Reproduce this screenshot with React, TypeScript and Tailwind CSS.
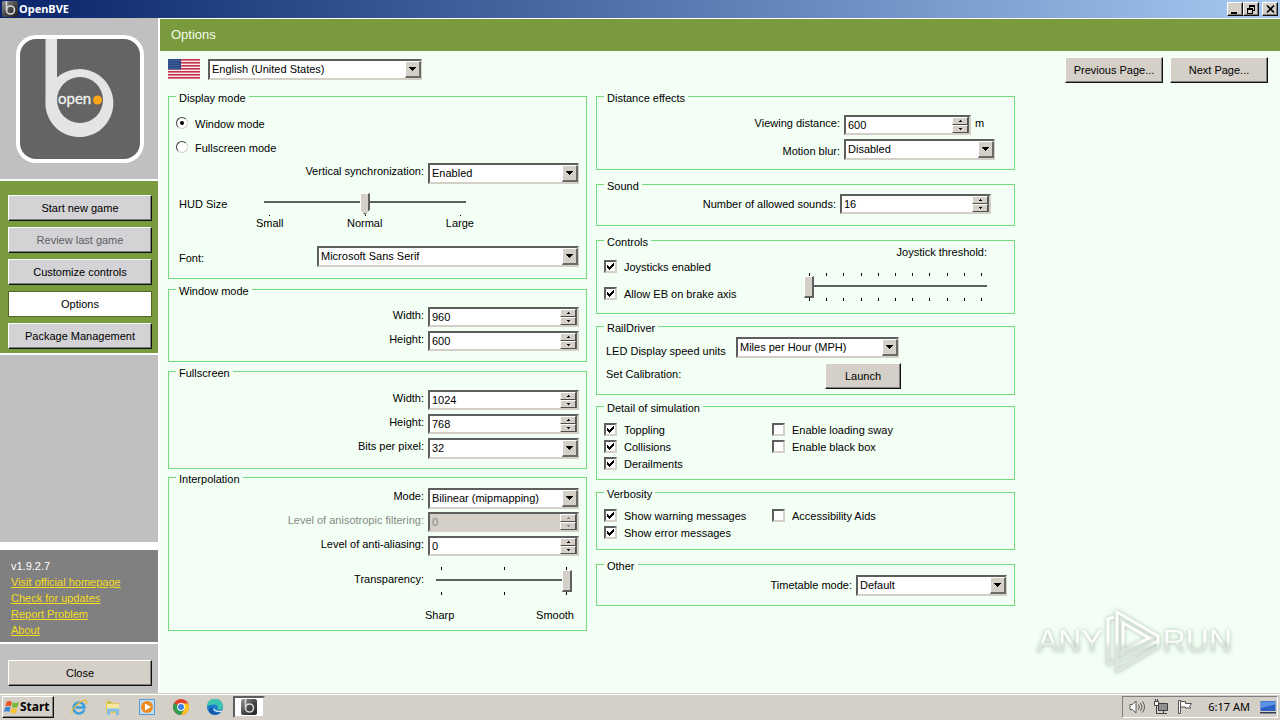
import { useId, type ReactNode } from 'react'

const raised =
  'border border-t-white border-l-white border-r-[#101010] border-b-[#101010] shadow-[inset_-1px_-1px_0_#808080]'
const sunken =
  'border-2 border-t-[#5c5f5c] border-l-[#5c5f5c] border-r-[#d4d0c8] border-b-[#d4d0c8]'

interface PushButtonProps {
  children: ReactNode
  className?: string
  disabled?: boolean
}

function PushButton({ children, className = '', disabled }: PushButtonProps) {
  return (
    <button type="button" disabled={disabled} className={`h-[26px] text-center ${raised} ${className}`}>
      {children}
    </button>
  )
}

/** Group box: the legend sits on the border line */
function Group({ title, className = '', children }: { title: string; className?: string; children: ReactNode }) {
  return (
    <fieldset className={`min-w-0 border border-[#74dc7c] ${className}`}>
      <legend className="ml-[7px] px-[3px] pt-1 leading-[13px]">{title}</legend>
      {children}
    </fieldset>
  )
}

interface ComboProps {
  id: string
  value: string
  className?: string
  label?: string
}

function Combo({ id, value, className = '', label }: ComboProps) {
  return (
    <div className={`relative h-[21px] bg-white ${sunken} ${className}`}>
      <select
        id={id}
        aria-label={label}
        defaultValue={value}
        className="block h-full w-full appearance-none bg-transparent pl-0.5 pr-5 leading-[17px] outline-none"
      >
        <option>{value}</option>
      </select>
      <span className="pointer-events-none absolute -right-px top-0 flex h-[17px] w-4 items-center justify-center border-b-2 border-l border-r-2 border-t border-b-[#6a6a66] border-l-white border-r-[#6a6a66] border-t-white bg-[#d4d0c8]">
        <svg width="7" height="4" viewBox="0 0 7 4" shapeRendering="crispEdges">
          <path d="M0 0h7v1H6v1H5v1H4v1H3V3H2V2H1V1H0z" />
        </svg>
      </span>
    </div>
  )
}

interface SpinnerProps {
  id: string
  value: string
  className?: string
  disabled?: boolean
}

function Spinner({ id, value, className = '', disabled }: SpinnerProps) {
  const arrow = disabled ? 'fill-[#808080]' : 'fill-black'
  const step = `flex h-2 w-4 items-center justify-center border border-t-white border-l-white border-r-[#505050] border-b-[#505050] bg-[#d4d0c8]`
  return (
    <div className={`flex h-5 ${disabled ? 'bg-[#d4d0c8]' : 'bg-white'} ${sunken} ${className}`}>
      <input
        id={id}
        type="text"
        inputMode="numeric"
        defaultValue={value}
        disabled={disabled}
        className="w-0 flex-1 bg-transparent pl-0.5 leading-[14px] outline-none disabled:text-[#808080]"
      />
      <div className="flex flex-col border-r border-[#5c5f5c]">
        <button type="button" aria-label="Increase" disabled={disabled} className={step}>
          <svg width="3" height="2" viewBox="0 0 3 2" shapeRendering="crispEdges" className={arrow}>
            <path d="M1 0h1v1h1v1H0V1h1z" />
          </svg>
        </button>
        <button type="button" aria-label="Decrease" disabled={disabled} className={step}>
          <svg width="3" height="2" viewBox="0 0 3 2" shapeRendering="crispEdges" className={arrow}>
            <path d="M0 0h3v1H2v1H1V1H0z" />
          </svg>
        </button>
      </div>
    </div>
  )
}

interface FieldProps {
  label: string
  value: string
  kind: 'combo' | 'spinner'
  disabled?: boolean
  className?: string
  labelClass?: string
  unit?: string
}

/** Right-aligned label followed by its control */
function Field({ label, value, kind, disabled, className = 'pr-[7px]', labelClass = '', unit }: FieldProps) {
  const id = useId()
  return (
    <div className={`flex h-6 items-start justify-end gap-1 ${className}`}>
      <label htmlFor={id} className={`leading-4 ${labelClass} ${disabled ? 'text-[#868a86]' : ''}`}>
        {label}
      </label>
      <div className="flex w-[151px] gap-1">
        {kind === 'combo' ? (
          <Combo id={id} value={value} className="flex-1" />
        ) : (
          <Spinner id={id} value={value} disabled={disabled} className="flex-1" />
        )}
        {unit && <span className="w-5 leading-4">{unit}</span>}
      </div>
    </div>
  )
}

function Check({ label, checked = false, className = 'h-[17px]' }: { label: string; checked?: boolean; className?: string }) {
  return (
    <label className={`flex items-center gap-[7px] ${className}`}>
      <span className="relative size-[13px]">
        <input
          type="checkbox"
          defaultChecked={checked}
          className={`peer block size-[13px] appearance-none bg-white ${sunken}`}
        />
        <svg
          viewBox="0 0 7 7"
          shapeRendering="crispEdges"
          className="pointer-events-none absolute left-[3px] top-[3px] hidden size-[7px] peer-checked:block"
        >
          <path d="M0 2h1v1h1v1h1V3h1V2h1V1h1V0h1v3H6v1H5v1H4v1H3v1H2V6H1V5H0z" />
        </svg>
      </span>
      <span className="pt-0.5 leading-[13px]">{label}</span>
    </label>
  )
}

function Radio({ label, checked = false }: { label: string; checked?: boolean }) {
  return (
    <label className="flex h-6 items-center gap-[7px]">
      <span className="relative size-3">
        <input
          type="radio"
          name="display-mode"
          defaultChecked={checked}
          className="peer block size-3 appearance-none rounded-full border border-b-[#d4d0c8] border-l-[#404040] border-r-[#d4d0c8] border-t-[#404040] bg-white"
        />
        <span className="pointer-events-none absolute left-1 top-1 hidden size-1 rounded-full bg-black peer-checked:block" />
      </span>
      <span className="pt-0.5 leading-[13px]">{label}</span>
    </label>
  )
}

function Ticks({ count, className = 'h-[3px]' }: { count: number; className?: string }) {
  return (
    <div className={`flex justify-between px-[5px] ${className}`}>
      {Array.from({ length: count }, (_, i) => (
        <span key={i} className="w-px bg-black" />
      ))}
    </div>
  )
}

interface SliderProps {
  id: string
  max: number
  value: number
  pointed?: boolean
}

function Slider({ id, max, value, pointed = false }: SliderProps) {
  return (
    <input
      id={id}
      type="range"
      min={0}
      max={max}
      defaultValue={value}
      className={`block h-[22px] w-full appearance-none bg-transparent [&::-webkit-slider-runnable-track]:h-[22px] [&::-webkit-slider-runnable-track]:bg-[linear-gradient(#5c5f5c,#5c5f5c)] [&::-webkit-slider-runnable-track]:bg-[length:100%_2px] [&::-webkit-slider-runnable-track]:bg-no-repeat [&::-webkit-slider-thumb]:h-[22px] [&::-webkit-slider-thumb]:w-[10px] [&::-webkit-slider-thumb]:appearance-none [&::-webkit-slider-thumb]:border-b-2 [&::-webkit-slider-thumb]:border-l [&::-webkit-slider-thumb]:border-r-2 [&::-webkit-slider-thumb]:border-t [&::-webkit-slider-thumb]:border-b-[#606060] [&::-webkit-slider-thumb]:border-l-white [&::-webkit-slider-thumb]:border-r-[#606060] [&::-webkit-slider-thumb]:border-t-white [&::-webkit-slider-thumb]:bg-[#d4d0c8] ${
        pointed
          ? '[&::-webkit-slider-runnable-track]:bg-[position:0_8px] [&::-webkit-slider-thumb]:[clip-path:polygon(0_0,100%_0,100%_75%,50%_100%,0_75%)]'
          : '[&::-webkit-slider-runnable-track]:bg-[position:0_9px]'
      }`}
    />
  )
}

function Logo() {
  return (
    <svg viewBox="0 0 128 128" className="size-32" role="img" aria-label="openBVE">
      <rect width="128" height="128" rx="20" fill="#fff" />
      <rect x="4" y="4" width="120" height="120" rx="16" fill="#646464" />
      <path d="M29.500 4h11.500v38.500A34 34 0 1 1 29.500 65z" fill="#e4e4e4" />
      <circle cx="64" cy="65" r="23" fill="#646464" />
      <text x="42" y="69" fill="#f2f2f2" stroke="#f2f2f2" strokeWidth="0.300" fontFamily="Lato, sans-serif" fontSize="15">
        open
      </text>
      <circle cx="81.500" cy="65" r="4.500" fill="#f9a51a" />
    </svg>
  )
}

function LogoBadge({ className }: { className: string }) {
  return (
    <svg viewBox="0 0 16 16" className={className}>
      <defs>
        <linearGradient id="badge" x1="0" y1="0" x2="1" y2="1">
          <stop offset="0" stopColor="#9a9a9a" />
          <stop offset="0.5" stopColor="#4a4a4a" />
          <stop offset="1" stopColor="#202020" />
        </linearGradient>
      </defs>
      <rect width="16" height="16" rx="2" fill="url(#badge)" />
      <path d="M4.500 0v9" stroke="#d8d8d8" strokeWidth="1.600" />
      <circle cx="8.500" cy="9" r="4" fill="none" stroke="#d8d8d8" strokeWidth="1.600" />
    </svg>
  )
}

function UsFlag() {
  return (
    <svg viewBox="0 0 32 20" className="h-5 w-8" role="img" aria-label="United States">
      <rect width="32" height="20" fill="#f4eef0" />
      {[0, 3, 6, 9, 12, 15, 18].map((y) => (
        <rect key={y} y={y} width="32" height="1.600" fill="#c8304c" />
      ))}
      <rect width="13" height="10.500" fill="#2c4a86" />
      {[1.5, 4, 6.500, 9].map((y) => (
        <path key={y} d={`M1 ${y}h11`} stroke="#6c86b8" strokeWidth="0.800" strokeDasharray="1 1.200" />
      ))}
    </svg>
  )
}

function TitleBar() {
  const control = `flex h-[14px] w-4 items-center justify-center bg-[#d4d0c8] ${raised}`
  return (
    <header className="flex h-[18px] items-center bg-linear-to-r from-[#0a246a] to-[#a6caf0] pl-0.5 pr-0.5">
      <LogoBadge className="size-4" />
      <h1 className="ml-px flex-1 font-['Noto_Sans',sans-serif] text-[11px] font-bold text-white">OpenBVE</h1>
      <button type="button" aria-label="Minimize" className={control}>
        <svg width="10" height="9" viewBox="0 0 10 9">
          <path d="M1 7h6v2H1z" />
        </svg>
      </button>
      <button type="button" aria-label="Restore" className={control}>
        <svg width="10" height="9" viewBox="0 0 10 9" shapeRendering="crispEdges">
          <path d="M3 0h6v6H7V5h1V2H4v1H3z" />
          <path d="M1 3h6v6H1zM2 5v3h4V5z" fillRule="evenodd" />
        </svg>
      </button>
      <button type="button" aria-label="Close window" className={`ml-[3px] ${control}`}>
        <svg width="9" height="8" viewBox="0 0 9 8" stroke="#000" strokeWidth="1.600">
          <path d="M1 0.500l7 7M8 0.500l-7 7" />
        </svg>
      </button>
    </header>
  )
}

const links = ['Visit official homepage', 'Check for updates', 'Report Problem', 'About']

function Sidebar() {
  return (
    <aside className="mr-0.5 flex w-[158px] shrink-0 flex-col bg-white">
      <div className="flex justify-center bg-[#c0c0c0] pb-4 pl-0.5 pt-[17px]">
        <Logo />
      </div>
      <nav className="mt-0.5 flex flex-col gap-1.5 bg-[#7a9a3e] pb-1 pl-2 pr-1.5 pt-3.5">
        <PushButton className="bg-[#d3d2d5]">Start new game</PushButton>
        <PushButton disabled className="bg-[#d3d2d5] text-[#5c6064]">
          Review last game
        </PushButton>
        <PushButton className="bg-[#d3d2d5]">Customize controls</PushButton>
        <button type="button" className="h-[26px] border border-[#4f6a25] bg-white text-center">
          Options
        </button>
        <PushButton className="bg-[#d3d2d5]">Package Management</PushButton>
      </nav>
      <div className="mt-0.5 flex-1 bg-[#c0c0c0]" />
      <div className="mt-2 flex flex-col items-start bg-[#808080] pb-1 pl-[11px] pt-2 leading-4 text-white">
        <p>v1.9.2.7</p>
        {links.map((text) => (
          <a key={text} href="#" className="text-[#f5dc1e] underline">
            {text}
          </a>
        ))}
      </div>
      <div className="mt-0.5 flex bg-[#c0c0c0] pb-[7px] pl-2 pr-1.5 pt-4">
        <PushButton className="flex-1 bg-[#d4d0c8]">Close</PushButton>
      </div>
    </aside>
  )
}

function LeftColumn() {
  const hud = useId()
  const font = useId()
  const transparency = useId()
  return (
    <div>
      <Group title="Display mode" className="pb-[11px]">
        <div className="pb-1 pl-[7px] pt-1.5">
          <Radio label="Window mode" checked />
          <Radio label="Fullscreen mode" />
        </div>
        <Field kind="combo" label="Vertical synchronization:" value="Enabled" />
        <div className="flex pl-2.5 pt-1.5">
          <label htmlFor={hud} className="w-[85px] leading-[22px]">
            HUD Size
          </label>
          <div className="w-[202px]">
            <Slider id={hud} max={2} value={1} pointed />
            <Ticks count={3} className="h-px" />
            <div className="-mx-2 flex justify-between leading-[14px]">
              <span>Small</span>
              <span>Normal</span>
              <span>Large</span>
            </div>
          </div>
        </div>
        <div className="flex justify-between pl-2.5 pr-[7px] pt-4">
          <label htmlFor={font} className="pt-1 leading-4">
            Font:
          </label>
          <Combo id={font} value="Microsoft Sans Serif" className="w-[262px]" />
        </div>
      </Group>

      <Group title="Window mode" className="mt-0.5 pb-1.5 pt-[9px]">
        <Field kind="spinner" label="Width:" value="960" />
        <Field kind="spinner" label="Height:" value="600" />
      </Group>

      <Group title="Fullscreen" className="mt-px pb-1.5 pt-2.5">
        <Field kind="spinner" label="Width:" value="1024" />
        <Field kind="spinner" label="Height:" value="768" />
        <Field kind="combo" label="Bits per pixel:" value="32" />
      </Group>

      <Group title="Interpolation" className="pb-2 pt-0.5">
        <Field kind="combo" label="Mode:" value="Bilinear (mipmapping)" />
        <Field kind="spinner" label="Level of anisotropic filtering:" value="0" disabled />
        <Field kind="spinner" label="Level of anti-aliasing:" value="0" />
        <div className="flex justify-end gap-3 pr-3.5 pt-[7px]">
          <label htmlFor={transparency} className="pt-1 leading-4">
            Transparency:
          </label>
          <div className="w-[136px]">
            <Ticks count={3} />
            <Slider id={transparency} max={2} value={2} />
            <Ticks count={3} />
          </div>
        </div>
        <div className="flex justify-end pr-3 pt-[13px] leading-[14px]">
          <div className="flex w-[149px] justify-between">
            <span>Sharp</span>
            <span>Smooth</span>
          </div>
        </div>
      </Group>
    </div>
  )
}

function RightColumn() {
  const threshold = useId()
  const units = useId()
  return (
    <div>
      <Group title="Distance effects" className="pb-1.5 pt-2.5">
        <Field kind="spinner" label="Viewing distance:" value="600" unit="m" className="pr-[19px]" />
        <Field kind="combo" label="Motion blur:" value="Disabled" className="pr-[19px]" labelClass="pt-1" />
      </Group>

      <Group title="Sound" className="mt-1.5 pb-[7px] pt-px">
        <Field
          kind="spinner"
          label="Number of allowed sounds:"
          value="16"
          className="pr-[23px]"
          labelClass="pt-0.5"
        />
      </Group>

      <Group title="Controls" className="mt-1.5 pb-1.5">
        <div className="flex justify-between pl-[7px] pr-[27px]">
          <div className="pt-1">
            <Check label="Joysticks enabled" checked className="h-[27px]" />
            <Check label="Allow EB on brake axis" checked className="h-[27px]" />
          </div>
          <div className="-mt-1 w-[183px]">
            <label htmlFor={threshold} className="block text-right leading-[14px]">
              Joystick threshold:
            </label>
            <div className="pt-3.5">
              <Ticks count={11} />
              <Slider id={threshold} max={10} value={0} />
              <Ticks count={11} />
            </div>
          </div>
        </div>
      </Group>

      <Group title="RailDriver" className="mt-1 pb-[5px] pt-0.5">
        <div className="flex items-start pl-[9px]">
          <label htmlFor={units} className="w-[130px] pt-1.5 leading-4">
            LED Display speed units
          </label>
          <Combo id={units} value="Miles per Hour (MPH)" className="w-[163px]" />
        </div>
        <div className="flex items-start pl-[9px] pt-1">
          <span className="w-[219px] leading-[22px]">Set Calibration:</span>
          <PushButton className="w-[76px] bg-[#d4d0c8]">Launch</PushButton>
        </div>
      </Group>

      <Group title="Detail of simulation" className="mt-[3px] pb-[7px] pt-1.5">
        <div className="flex pl-[7px]">
          <div className="w-[168px]">
            <Check label="Toppling" checked />
            <Check label="Collisions" checked />
            <Check label="Derailments" checked />
          </div>
          <div>
            <Check label="Enable loading sway" />
            <Check label="Enable black box" />
          </div>
        </div>
      </Group>

      <Group title="Verbosity" className="mt-1 pb-2 pt-1.5">
        <div className="flex pl-[7px]">
          <div className="w-[168px]">
            <Check label="Show warning messages" checked />
            <Check label="Show error messages" checked />
          </div>
          <div>
            <Check label="Accessibility Aids" />
          </div>
        </div>
      </Group>

      <Group title="Other" className="mt-1.5 pb-1.5 pt-0.5">
        <Field kind="combo" label="Timetable mode:" value="Default" labelClass="pt-0.5" />
      </Group>
    </div>
  )
}

function Watermark() {
  const word = 'bg-linear-to-b from-white from-50% to-[#dce6de] to-60% bg-clip-text text-transparent'
  return (
    <div className="pointer-events-none absolute bottom-5 right-12 flex items-center font-['Liberation_Sans',sans-serif] text-[32px] leading-10 drop-shadow-[0_0_2px_rgba(90,110,90,0.5)]">
      <span className={word}>ANY</span>
      <svg width="60" height="64" viewBox="0 0 60 64" fill="none" stroke="url(#mark)" strokeWidth="3">
        <defs>
          <linearGradient id="mark" x1="0" y1="0" x2="0" y2="64" gradientUnits="userSpaceOnUse">
            <stop offset="0.500" stopColor="#fff" />
            <stop offset="0.600" stopColor="#dce6de" />
          </linearGradient>
        </defs>
        <path d="M11 8L5 10v45l6-2" />
        <path d="M14 3v49l41-20v-5z" />
        <path d="M20 14v28l26-13z" />
        <path d="M14 57v5l41-24v-6" />
      </svg>
      <span className={word}>RUN</span>
    </div>
  )
}

function Taskbar() {
  return (
    <footer className="flex h-[27px] items-center border-t border-[#d4d0c8] bg-[#d4d0c8] pl-0.5 pr-0.5 font-['Noto_Sans',sans-serif] shadow-[inset_0_1px_0_#fff]">
      <button type="button" className={`flex h-[22px] w-[52px] items-center pl-px ${raised}`}>
        <svg viewBox="0 0 16 16" className="size-4 shrink-0">
          <path d="M2.500 3C4.500 1.500 6 2 8 3L6.800 7.500C5 6.500 3.500 6.500 1.300 7.700z" fill="#e8572a" />
          <path d="M8.800 3.300c2 1 3.700 1 6.200-.3l-1.300 4.700c-2 1.300-4 1.300-6 .2z" fill="#7ab83a" />
          <path d="M1 8.700c2-1.200 3.700-1 5.500-.2L5.300 13c-2-1-3.500-1-5.300.2z" fill="#3a86d8" />
          <path d="M7.400 8.900c2 1 3.800 1 6-.2L12 13.400c-2 1.200-3.800 1-5.800.1z" fill="#f7c22e" />
        </svg>
        <span className="text-[12px] font-bold leading-4">Start</span>
      </button>

      <nav aria-label="Quick launch" className="ml-[17px] flex gap-[18px]">
        <button type="button" aria-label="Internet Explorer">
          <svg viewBox="0 0 16 16" className="size-4" fill="none">
            <path d="M13.300 10.500A5.500 5.500 0 1 1 13.500 8.500H4.500" stroke="#3a9fe0" strokeWidth="2.400" />
            <path d="M1 14.500C-.5 11 8 2 14.500 1.200c1.500.3 1 2.300.3 3.500" stroke="#eebb35" strokeWidth="1.300" />
          </svg>
        </button>
        <button type="button" aria-label="File Explorer">
          <svg viewBox="0 0 16 16" className="size-4">
            <path d="M1 2h5l1 2h7v10H1z" fill="#e9c65c" />
            <path d="M2 5h12v6H2z" fill="#f8e7a0" />
            <path d="M3 3h3v1H3z" fill="#6fbf5a" />
            <path d="M2 16V9.500h12V16h-3v-3.500H5V16z" fill="#7fc0e8" />
          </svg>
        </button>
        <button type="button" aria-label="Media Player">
          <svg viewBox="0 0 16 16" className="size-4">
            <rect x="0.500" y="0.500" width="15" height="15" fill="#bfdcf4" stroke="#5a9ad0" />
            <circle cx="8" cy="8" r="6" fill="#f08a1c" />
            <path d="M6 4.500v7L12 8z" fill="#fff" />
          </svg>
        </button>
        <button type="button" aria-label="Chrome">
          <svg viewBox="0 0 16 16" className="size-4">
            <circle cx="8" cy="8" r="8" fill="#e3402f" />
            <path d="M8 8L1.100 4A8 8 0 0 0 8 16l3.500-6z" fill="#2f9e4d" />
            <path d="M8 4.500h7.200A8 8 0 0 1 8 16l3.500-6z" fill="#fbc71c" />
            <circle cx="8" cy="8" r="3.900" fill="#fff" />
            <circle cx="8" cy="8" r="3" fill="#3f7ee8" />
          </svg>
        </button>
        <button type="button" aria-label="Edge">
          <svg viewBox="0 0 16 16" className="size-4">
            <circle cx="8" cy="8" r="8" fill="#1b79c9" />
            <path d="M0 7.500A8 8 0 0 1 16 7.500c0 3-2.500 4-6 3 2-2.500 0-5-3-5-3 0-6 1-7 2z" fill="#3cc5b0" />
            <path d="M5.500 8c-1 4 2 6.500 7 6A8 8 0 0 1 3 14c-2-2-1-5.500 2.500-6z" fill="#1657a6" />
            <path d="M7 9.500c0 2.500 4 3.700 8 2.500" stroke="#e6f3fb" strokeWidth="1.200" fill="none" />
          </svg>
        </button>
      </nav>

      <button
        type="button"
        aria-label="OpenBVE"
        className={`ml-2.5 flex h-[22px] w-8 items-center justify-center bg-white ${sunken}`}
      >
        <LogoBadge className="size-4" />
      </button>

      <div className="ml-auto flex h-[22px] items-center border border-b-white border-l-[#808080] border-r-white border-t-[#808080] pl-1.5 pr-px">
        <svg viewBox="0 0 16 16" className="size-4" fill="none" stroke="#5a5a5a">
          <path d="M1 5.500h2.500L7 2v12l-3.500-3.500H1z" fill="#fff" />
          <path d="M9.500 5.500q1.500 2.500 0 5M11.500 4q3 4 0 8M13.500 2.500q4 5.500 0 11" />
        </svg>
        <svg viewBox="0 0 16 16" className="ml-2 size-4" fill="none" stroke="#404040">
          <path d="M5.500 4.500h9v7h-9z" fill="#909090" />
          <path d="M1.500 2.500h4v4h-4zM2.500 0v2.500M4.500 0v2.500" fill="#fff" />
          <path d="M3.500 6.500v8h5M7 14.500h7M10.500 12v2" />
        </svg>
        <svg viewBox="0 0 16 16" className="ml-2 size-4" fill="none" stroke="#505050">
          <path d="M1.500 1.500h2v13h-2z" fill="#fff" />
          <path d="M3.500 2.500h5v2h6l-2 3 1.500 1.500h-5.500v-1h-5z" fill="#fff" />
        </svg>
        <time className="ml-[15px] text-[11px] leading-4">6:17 AM</time>
        <svg viewBox="0 0 16 16" className="ml-2.5 size-4">
          <rect x="0.500" y="2" width="15" height="10" fill="#2a5fc4" />
          <path d="M1 2.500h14v3L1 9z" fill="#5a93e4" />
          <path d="M0 13h16v1.500H0z" fill="#303a50" />
        </svg>
      </div>
    </footer>
  )
}

export default function App() {
  return (
    <div className="flex min-h-screen flex-col bg-white font-['Liberation_Sans',sans-serif] text-[11px] text-black">
      <TitleBar />
      <div className="flex flex-1">
        <Sidebar />
        <main className="relative flex-1 bg-[#f3fff5]">
          <h2 className="border-t border-white bg-[#7a9a3e] pl-[11px] text-[13px] leading-8 text-[#f4faea]">Options</h2>
          <div className="flex items-start pl-2 pr-3 pt-1.5">
            <div className="mt-0.5 flex gap-2">
              <UsFlag />
              <Combo id="language" label="Language" value="English (United States)" className="w-[214px]" />
            </div>
            <div className="ml-auto flex gap-[7px]">
              <PushButton className="w-[98px] bg-[#d4d0c8]">Previous Page...</PushButton>
              <PushButton className="w-[98px] bg-[#d4d0c8]">Next Page...</PushButton>
            </div>
          </div>
          <div className="ml-2 mt-[5px] grid max-w-[847px] grid-cols-2 items-start gap-[9px]">
            <LeftColumn />
            <RightColumn />
          </div>
          <Watermark />
        </main>
      </div>
      <Taskbar />
    </div>
  )
}
